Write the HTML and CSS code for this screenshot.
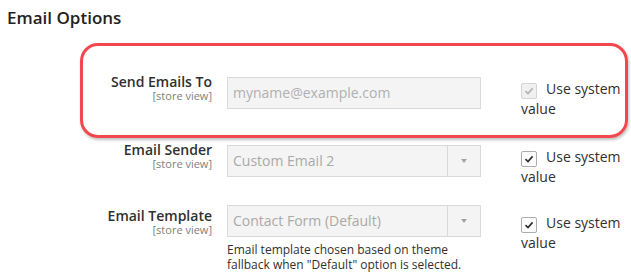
FILE: index.html
```html
<!DOCTYPE html>
<html lang="en">
<head>
    <meta charset="UTF-8">
    <meta name="viewport" content="width=device-width, initial-scale=1.0">
    <title>Email Options</title>
    <link rel="stylesheet" href="styles.css">
</head>
<body>
    <div class="section">
        <h2 class="legend">Email Options</h2>

        <div class="field field-highlight">
            <div class="label">
                <span class="label-text">Send Emails To</span>
                <span class="scope">[store view]</span>
            </div>
            <div class="control">
                <div class="input">myname@example.com</div>
            </div>
            <div class="use-default">
                <span class="checkbox disabled">
                    <svg width="14" height="14" viewBox="0 0 14 14"><path d="M3.5 7.2 L6 9.6 L10.6 4.4" fill="none" stroke="#b3b3b3" stroke-width="1.7"/></svg>
                </span>Use system value
            </div>
        </div>

        <div class="field">
            <div class="label">
                <span class="label-text">Email Sender</span>
                <span class="scope">[store view]</span>
            </div>
            <div class="control">
                <div class="select">
                    <span class="select-value">Custom Email 2</span>
                    <span class="select-arrow"><i></i></span>
                </div>
            </div>
            <div class="use-default">
                <span class="checkbox">
                    <svg width="14" height="14" viewBox="0 0 14 14"><path d="M3.5 7.2 L6 9.6 L10.6 4.4" fill="none" stroke="#303030" stroke-width="1.7"/></svg>
                </span>Use system value
            </div>
        </div>

        <div class="field field-template">
            <div class="label">
                <span class="label-text">Email Template</span>
                <span class="scope">[store view]</span>
            </div>
            <div class="control">
                <div class="select">
                    <span class="select-value">Contact Form (Default)</span>
                    <span class="select-arrow"><i></i></span>
                </div>
                <p class="note">Email template chosen based on theme fallback when "Default" option is selected.</p>
            </div>
            <div class="use-default">
                <span class="checkbox">
                    <svg width="14" height="14" viewBox="0 0 14 14"><path d="M3.5 7.2 L6 9.6 L10.6 4.4" fill="none" stroke="#303030" stroke-width="1.7"/></svg>
                </span>Use system value
            </div>
        </div>
    </div>
</body>
</html>
```

FILE: styles.css
```css
* {
    margin: 0;
    padding: 0;
    box-sizing: border-box;
}
body {
    font-family: "Open Sans", sans-serif;
    color: #303030;
    background: #fff;
}
.legend {
    padding: 8px 0 0 7px;
    font-size: 17px;
    line-height: 20px;
    font-weight: 600;
    color: #222;
}
.field {
    display: flex;
    align-items: flex-start;
    width: 548px;
    margin-left: 80px;
    border: 3px solid transparent;
}
.field-highlight {
    margin-top: 15px;
    padding: 27px 0 17px;
    border-color: #f2474d;
    border-radius: 18px;
    box-shadow: 1px 2px 3px rgba(0, 0, 0, 0.25);
}
.field-template {
    margin-top: 15px;
}
.label {
    width: 129px;
    text-align: right;
}
.label-text {
    display: block;
    font-size: 14px;
    line-height: 17px;
    font-weight: 600;
    color: #303030;
}
.scope {
    display: block;
    font-size: 11px;
    line-height: 11px;
    color: #808080;
}
.control {
    width: 254px;
    margin: 4px 0 0 15px;
}
.field-template .control {
    margin-top: -2px;
}
.input, .select {
    height: 32px;
    border: 1px solid #d9d9d9;
    background: #f4f4f4;
    font-size: 14px;
    line-height: 30px;
    color: #b0b0b0;
}
.input {
    padding-left: 5px;
}
.select {
    display: flex;
}
.select-value {
    flex: 1;
    padding-left: 5px;
    color: #a9a9a9;
}
.select-arrow {
    width: 33px;
    border-left: 1px solid #d9d9d9;
    display: flex;
    justify-content: center;
    align-items: center;
}
.select-arrow i {
    border-left: 3px solid transparent;
    border-right: 3px solid transparent;
    border-top: 4px solid #a3a3a3;
}
.note {
    margin-top: 5px;
    font-size: 12px;
    line-height: 15px;
    color: #303030;
}
.use-default {
    width: 100px;
    margin: 6px 0 0 40px;
    font-size: 14px;
    line-height: 19px;
    color: #303030;
}
.checkbox {
    display: inline-flex;
    justify-content: center;
    align-items: center;
    width: 16px;
    height: 16px;
    margin-right: 9px;
    vertical-align: -4px;
    border: 1px solid #adadad;
    border-radius: 2px;
    background: #fff;
}
.checkbox.disabled {
    border-color: #d4d4d4;
    background: #f0f0f0;
}
```
